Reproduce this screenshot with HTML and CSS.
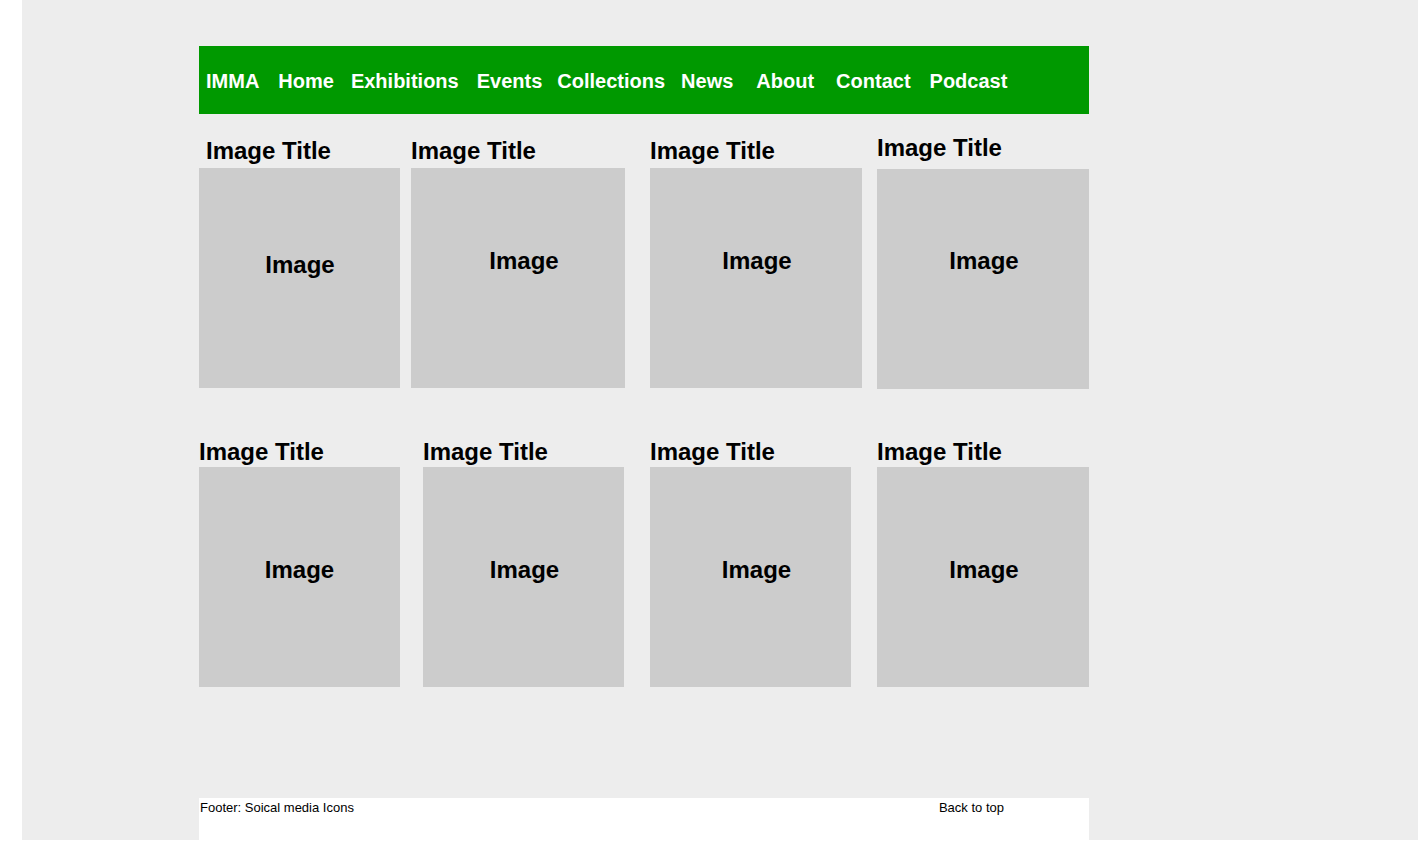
FILE: index.html
```html
<!DOCTYPE html>
<html lang="en">
<head>
<meta charset="utf-8">
<title>IMMA</title>
<link rel="stylesheet" href="styles.css">
</head>
<body>
<div class="page">
  <div class="container">
    <nav class="nav">
      <a class="nav-link" href="#">IMMA</a>
      <a class="nav-link nav-link--plus1" href="#">Home</a>
      <a class="nav-link nav-link--minus1" href="#">Exhibitions</a>
      <a class="nav-link" href="#">Events</a>
      <a class="nav-link nav-link--tight" href="#">Collections</a>
      <a class="nav-link nav-link--snug" href="#">News</a>
      <a class="nav-link nav-link--wide" href="#">About</a>
      <a class="nav-link nav-link--roomy" href="#">Contact</a>
      <a class="nav-link nav-link--plus1" href="#">Podcast</a>
    </nav>

    <section class="row row--first">
      <div class="card card--w201 card--inset">
        <h2 class="card-title">Image Title</h2>
        <div class="card-img card-img--low card-img--tiny"><span class="card-label">Image</span></div>
      </div>
      <div class="card card--w214 gap-11">
        <h2 class="card-title">Image Title</h2>
        <div class="card-img card-img--high card-img--shift"><span class="card-label">Image</span></div>
      </div>
      <div class="card card--w212 gap-25">
        <h2 class="card-title">Image Title</h2>
        <div class="card-img card-img--high card-img--nudge"><span class="card-label">Image</span></div>
      </div>
      <div class="card card--w212 card--raised gap-15">
        <h2 class="card-title">Image Title</h2>
        <div class="card-img card-img--higher card-img--nudge"><span class="card-label">Image</span></div>
      </div>
    </section>

    <section class="row row--second">
      <div class="card card--w201">
        <h2 class="card-title">Image Title</h2>
        <div class="card-img card-img--mid"><span class="card-label">Image</span></div>
      </div>
      <div class="card card--w201 gap-23">
        <h2 class="card-title">Image Title</h2>
        <div class="card-img card-img--mid card-img--nudge"><span class="card-label">Image</span></div>
      </div>
      <div class="card card--w201 gap-26">
        <h2 class="card-title">Image Title</h2>
        <div class="card-img card-img--mid card-img--shift2"><span class="card-label">Image</span></div>
      </div>
      <div class="card card--w212 gap-26">
        <h2 class="card-title">Image Title</h2>
        <div class="card-img card-img--mid card-img--nudge"><span class="card-label">Image</span></div>
      </div>
    </section>

    <footer class="footer">
      <span class="footer-text">Footer: Soical media Icons</span>
      <a class="footer-top" href="#">Back to top</a>
    </footer>
  </div>
</div>
</body>
</html>
```

FILE: styles.css
```css
html, body {
  margin: 0;
  padding: 0;
  background: #ffffff;
}

body {
  font-family: "Liberation Sans", Arial, sans-serif;
  color: #000000;
}

.page {
  margin-left: 22px;
  width: 1396px;
  background: #ededed;
  padding-top: 46px;
  box-sizing: border-box;
  display: flow-root;
}

.container {
  width: 890px;
  margin-left: 177px;
  display: flex;
  flex-direction: column;
}

/* Navigation */
.nav {
  height: 68px;
  background: #009900;
  display: flex;
  align-items: center;
  gap: 18px;
  padding: 2px 0 0 7px;
  box-sizing: border-box;
}

.nav-link {
  color: #ffffff;
  font-weight: bold;
  font-size: 20px;
  line-height: 23px;
  text-decoration: none;
}

.nav-link--plus1 { margin-left: 1px; }
.nav-link--minus1 { margin-left: -1px; }
.nav-link--tight { margin-left: -3px; }
.nav-link--snug { margin-left: -2px; }
.nav-link--wide { margin-left: 5px; }
.nav-link--roomy { margin-left: 4px; }

/* Image rows */
.row {
  display: flex;
  align-items: flex-start;
}

.row--first { margin-top: 22px; }
.row--second { margin-top: 48px; }

.card {
  display: flex;
  flex-direction: column;
  flex: none;
}

.card--w201 { width: 201px; }
.card--w212 { width: 212px; }
.card--w214 { width: 214px; }

.gap-11 { margin-left: 11px; }
.gap-15 { margin-left: 15px; }
.gap-23 { margin-left: 23px; }
.gap-25 { margin-left: 25px; }
.gap-26 { margin-left: 26px; }

.card-title {
  margin: 0 0 3px 0;
  padding-top: 1px;
  font-size: 24px;
  line-height: 28px;
  font-weight: bold;
}

.card--inset .card-title { padding-left: 7px; }

.card--raised .card-title {
  margin-top: -3px;
  margin-bottom: 7px;
}

.row--second .card-title {
  padding-top: 1px;
  margin-bottom: 1px;
}

.card-img {
  height: 220px;
  background: #cccccc;
  display: flex;
  justify-content: center;
  box-sizing: border-box;
}

.card-img--low { padding-top: 83px; }
.card-img--high { padding-top: 79px; }
.card-img--higher { padding-top: 78px; }
.card-img--mid { padding-top: 89px; }
.card-img--tiny { padding-left: 1px; }
.card-img--nudge { padding-left: 2px; }
.card-img--shift { padding-left: 12px; }
.card-img--shift2 { padding-left: 12px; }

.card-label {
  font-size: 24px;
  line-height: 28px;
  font-weight: bold;
}

/* Footer */
.footer {
  margin-top: 111px;
  height: 42px;
  background: #ffffff;
  display: flex;
  justify-content: space-between;
  align-items: flex-start;
  padding: 2px 85px 0 1px;
  box-sizing: border-box;
  font-size: 13px;
  line-height: 15px;
}

.footer-text { color: #000000; }

.footer-top {
  color: #000000;
  text-decoration: none;
}
```
